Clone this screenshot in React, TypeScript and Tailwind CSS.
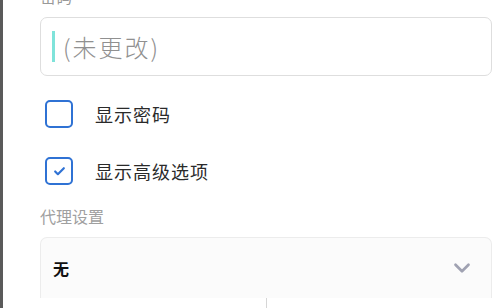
import { Check, ChevronDown } from 'lucide-react';

const FONT = { fontFamily: '"Noto Sans CJK SC", "Noto Sans", sans-serif' };

function CheckRow({ label, checked }: { label: string; checked?: boolean }) {
  return (
    <div className="flex h-[28px] items-center">
      <div className="ml-[5px] flex h-[28px] w-[28px] items-center justify-center rounded-[5px] border-2 border-[#2f72d4] bg-white">
        {checked && <Check className="h-[13px] w-[13px] text-[#2f72d4]" strokeWidth={4} />}
      </div>
      <span className="ml-[22px] text-[18px] leading-none tracking-[1px] text-[#2a2a2a]">{label}</span>
    </div>
  );
}

export default function App() {
  return (
    <div className="flex h-[308px] w-[500px] overflow-hidden bg-white" style={FONT}>
      <div className="h-full w-[3px] bg-[#5a5a5a]" />
      <div className="flex w-[489px] flex-col pl-[37px]">
        <div className="-mt-[12px] h-[17px] text-[16px] leading-none text-[#999]">密码</div>
        <div className="mt-[12px] flex h-[59px] items-center rounded-[7px] border border-[#dedede] pl-[11px]">
          <div className="h-[31px] w-[3px] bg-[#7fe3da]" />
          <span className="ml-[8px] text-[24px] font-light leading-none tracking-[2px] text-[#909090]">(未更改)</span>
        </div>
        <div className="mt-[24px]">
          <CheckRow label="显示密码" />
        </div>
        <div className="mt-[29px]">
          <CheckRow label="显示高级选项" checked />
        </div>
        <div className="mt-[23px] text-[16px] leading-none text-[#a0a0a0]">代理设置</div>
        <div className="mt-[13px] flex h-[61px] items-center justify-between rounded-t-[7px] border border-b-0 border-[#ececec] bg-[#fbfbfb] pl-[12px] pr-[16px]">
          <span className="text-[16px] font-bold leading-none text-[#111]">无</span>
          <ChevronDown className="h-[26px] w-[26px] text-[#a0a2b2]" strokeWidth={2.5} />
        </div>
        <div className="flex flex-1 pl-[226px]">
          <div className="h-full w-[1px] bg-[#d6d6d6]" />
        </div>
      </div>
    </div>
  );
}
